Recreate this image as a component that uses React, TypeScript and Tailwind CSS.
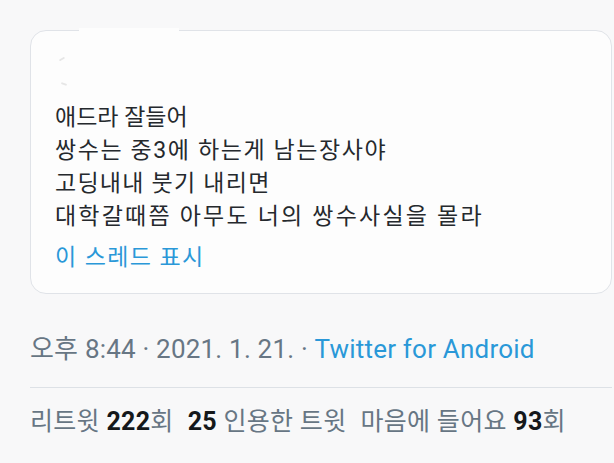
import React from "react";

const font = { fontFamily: 'Roboto, "Noto Sans CJK KR", sans-serif' };

export default function App() {
  return (
    <div
      className="w-[614px] h-[463px] bg-[#f8f8f9] overflow-hidden pt-[30px] pl-[30px] pr-[2px]"
      style={font}
    >
      <div className="relative h-[264px] rounded-[16px] border-[1.5px] border-[#e0e3e8] bg-[#fdfdfd] pl-[24px] pt-[70px]">
        <div className="absolute left-[48px] -top-[3px] w-[100px] h-[8px] bg-[#fdfdfd]" />
        <div className="absolute left-[28px] top-[27px] w-[6px] h-[2px] rounded-full bg-[#e6e6e6] rotate-[-30deg]" />
        <div className="absolute left-[30px] top-[52px] w-[6px] h-[2px] rounded-full bg-[#e6e6e6] rotate-[20deg]" />
        <div className="text-[23px] leading-[33px] text-[#25292d]">
          <div className="tracking-[0px]">애드라 잘들어</div>
          <div className="tracking-[1.6px]">쌍수는 중3에 하는게 남는장사야</div>
          <div className="tracking-[1.25px]">고딩내내 붓기 내리면</div>
          <div className="tracking-[2.2px]">대학갈때쯤 아무도 너의 쌍수사실을 몰라</div>
        </div>
        <div className="mt-[8px] text-[23px] leading-[33px] tracking-[1.4px] text-[#2a98d8]">이 스레드 표시</div>
      </div>
      <div className="mt-[40px] text-[26px] leading-[30px] tracking-[0.2px] text-[#677684] whitespace-nowrap">
        오후 8:44 · 2021. 1. 21. · <span className="text-[#2a98d8]">Twitter for Android</span>
      </div>
      <div className="mt-[23px] h-px bg-[#dde1e6]" />
      <div className="mt-[19px] text-[25px] leading-[30px] tracking-[0.3px] text-[#677684] whitespace-nowrap">
        리트윗 <span className="font-bold text-[#15181b]">222</span>회
        <span className="ml-[14px] font-bold text-[#15181b]">25</span> 인용한 트윗
        <span className="ml-[14px]">마음에 들어요 </span>
        <span className="font-bold text-[#15181b]">93</span>회
      </div>
    </div>
  );
}
